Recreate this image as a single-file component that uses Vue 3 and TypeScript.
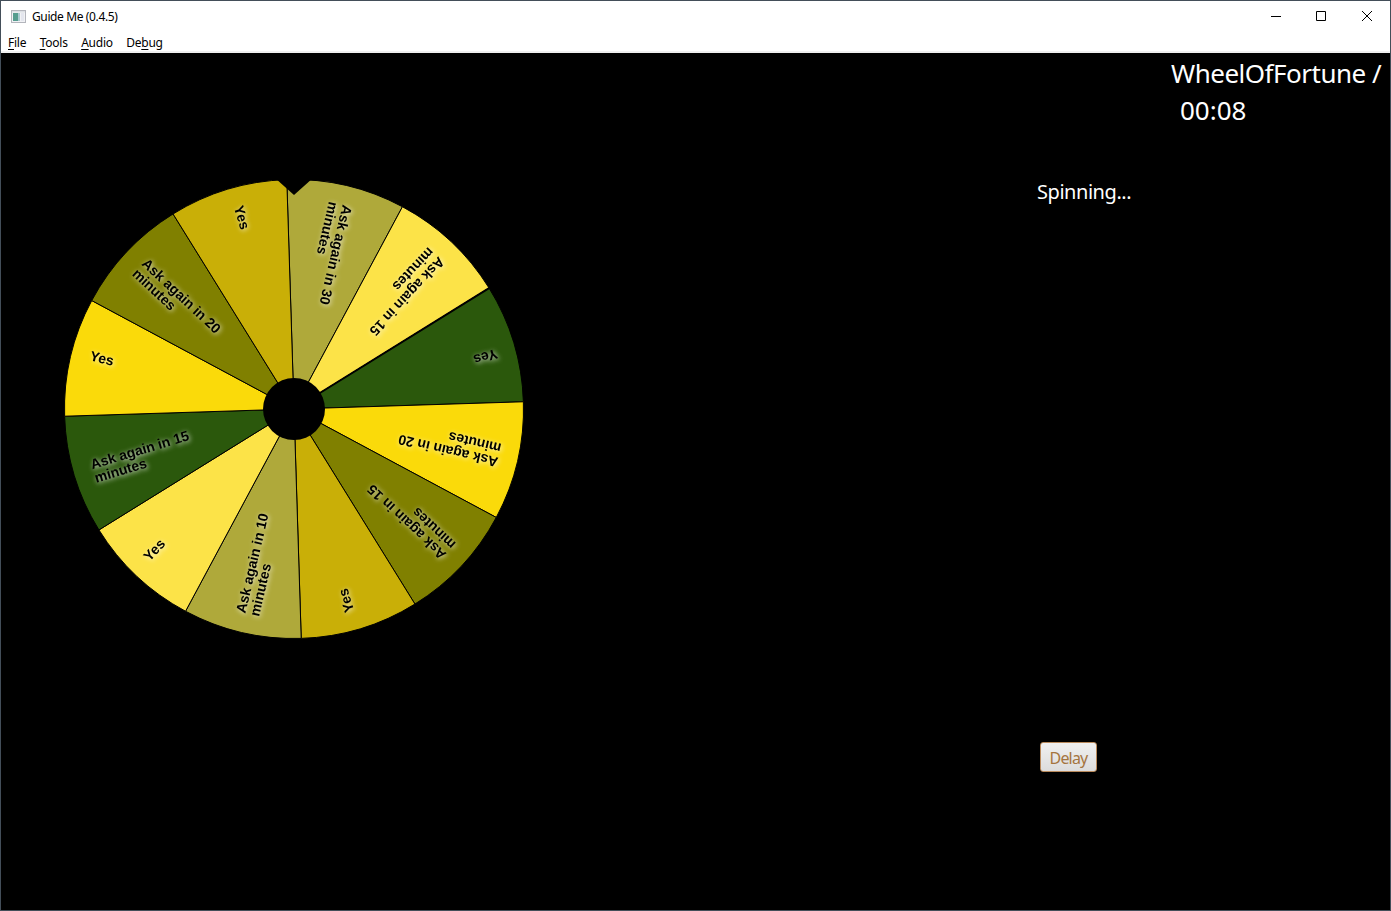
<script setup lang="ts">
interface Segment {
  lines: string[]
  fill: string
}

interface MenuItem {
  before: string
  key: string
  after: string
}

const menus: MenuItem[] = [
  { before: '', key: 'F', after: 'ile' },
  { before: '', key: 'T', after: 'ools' },
  { before: '', key: 'A', after: 'udio' },
  { before: 'De', key: 'b', after: 'ug' },
]

const cx = 294
const cy = 356
const radius = 229.5
const spin = -1.8

const ask = (n: number): string[] => [`Ask again in ${n}`, 'minutes']

// Clockwise, beginning with the segment just right of the pointer.
const segments: Segment[] = [
  { lines: ask(30), fill: '#afa93a' },
  { lines: ask(15), fill: '#fce348' },
  { lines: ['Yes'], fill: '#2b580c' },
  { lines: ask(20), fill: '#fada0a' },
  { lines: ask(15), fill: '#808000' },
  { lines: ['Yes'], fill: '#c9af07' },
  { lines: ask(10), fill: '#afa93a' },
  { lines: ['Yes'], fill: '#fce348' },
  { lines: ask(15), fill: '#2b580c' },
  { lines: ['Yes'], fill: '#fada0a' },
  { lines: ask(20), fill: '#808000' },
  { lines: ['Yes'], fill: '#c9af07' },
]

function point(deg: number): string {
  const a = (deg * Math.PI) / 180
  return `${(radius * Math.sin(a)).toFixed(2)} ${(-radius * Math.cos(a)).toFixed(2)}`
}

function wedge(i: number): string {
  const start = spin + i * 30
  return `M0 0L${point(start)}A${radius} ${radius} 0 0 1 ${point(start + 30)}Z`
}

function labelTurn(i: number): string {
  return `rotate(${(spin + i * 30 + 15 + 90).toFixed(2)})`
}
</script>

<template>
  <div class="window">
    <header class="titlebar">
      <svg class="app-icon" width="15" height="13" viewBox="0 0 15 13">
        <rect x="0.5" y="0.5" width="14" height="12" fill="#f1f2f5" stroke="#b3b5bc" />
        <rect x="1" y="1" width="13" height="1.5" fill="#dcdfe4" />
        <rect x="2" y="3" width="5" height="8" fill="#559c8e" />
        <rect x="7" y="3" width="2" height="8" fill="#a9c9cf" />
        <rect x="10" y="3" width="3" height="8" fill="#e4e6ee" />
      </svg>
      <span class="title">Guide Me (0.4.5)</span>
      <div class="controls">
        <svg width="10" height="10" viewBox="0 0 10 10"><path d="M0 5.5H10" /></svg>
        <svg width="10" height="10" viewBox="0 0 10 10"><path d="M0.5 0.5H9.5V9.5H0.5Z" /></svg>
        <svg width="10" height="10" viewBox="0 0 10 10"><path d="M0 0L10 10M10 0L0 10" /></svg>
      </div>
    </header>
    <nav class="menubar">
      <span v-for="m in menus" :key="m.key" class="menu">{{ m.before }}<u>{{ m.key }}</u>{{ m.after }}</span>
    </nav>
    <main class="content">
      <svg class="wheel" width="588" height="700" viewBox="0 0 588 700">
        <g :transform="`translate(${cx} ${cy})`">
          <path v-for="(s, i) in segments" :key="i" :d="wedge(i)" :fill="s.fill" stroke="#000" stroke-width="1" />
          <path :d="`M0 0L${point(58.2)}`" stroke="#000" stroke-width="2" />
          <g class="labels">
            <g v-for="(s, i) in segments" :key="i" :transform="labelTurn(i)">
              <text v-for="(line, n) in s.lines" :key="n" x="-210.5" :y="-0.6 + n * 14">{{ line }}</text>
            </g>
          </g>
          <circle r="31" />
          <path d="M-19 -231H19L0 -214Z" />
        </g>
      </svg>
      <aside class="panel">
        <div class="status">
          <span class="mode">WheelOfFortune /</span>
          <span class="clock">00:08</span>
        </div>
        <p class="message">Spinning...</p>
        <button class="delay" type="button">Delay</button>
      </aside>
    </main>
  </div>
</template>

<style>
body {
  background: #000;
}
</style>

<style scoped>
.window {
  box-sizing: border-box;
  width: 1391px;
  height: 911px;
  border: 1px solid #434e59;
  background: #000;
  display: flex;
  flex-direction: column;
  overflow: hidden;
  font-family: 'Noto Sans', 'Open Sans', sans-serif;
}
.titlebar {
  height: 30px;
  flex: none;
  background: #fff;
  display: flex;
  align-items: center;
  padding-left: 10px;
}
.title {
  margin-left: 6px;
  font-size: 12px;
  line-height: 16px;
  padding-top: 1px;
  letter-spacing: -0.38px;
  color: #000;
}
.controls {
  margin-left: auto;
  padding-right: 18px;
  display: flex;
  gap: 36px;
}
.controls svg {
  display: block;
  fill: none;
  stroke: #000;
}
.controls svg:first-child {
  margin-right: -1px;
}
.menubar {
  box-sizing: border-box;
  height: 22px;
  flex: none;
  background: #fff;
  border-bottom: 2px solid #f0f0f0;
  display: flex;
  align-items: center;
  gap: 13.5px;
  padding: 2px 0 0 7px;
  font-size: 12px;
  letter-spacing: -0.25px;
  color: #000;
}
.menu u {
  text-underline-offset: 2px;
}
.content {
  flex: 1;
  display: flex;
  justify-content: space-between;
}
.wheel {
  display: block;
  margin-left: -1px;
}
.labels {
  font: bold 14px 'Liberation Sans', Arial, sans-serif;
  filter: drop-shadow(1px 1px 2.5px rgba(255, 255, 255, 0.9));
}
.panel {
  width: 353px;
  display: flex;
  flex-direction: column;
  color: #fff;
}
.status {
  height: 74px;
  padding: 2px 0 0 134px;
  display: flex;
  flex-direction: column;
  font-size: 26px;
  line-height: 37px;
  white-space: nowrap;
}
.mode {
  letter-spacing: -0.5px;
}
.clock {
  padding-left: 9px;
}
.message {
  margin: 49px 0 0;
  font-size: 20px;
  line-height: 28px;
  letter-spacing: -0.45px;
}
.delay {
  box-sizing: border-box;
  width: 57px;
  height: 30px;
  margin: 536px 0 0 3px;
  padding: 1px 0 0;
  border: 1px solid #b98a5c;
  border-radius: 3px;
  background: linear-gradient(#f0f0f0, #dcdcdc);
  color: #a5753f;
  font: 16px 'Noto Sans', 'Open Sans', sans-serif;
  letter-spacing: -0.8px;
}
</style>
